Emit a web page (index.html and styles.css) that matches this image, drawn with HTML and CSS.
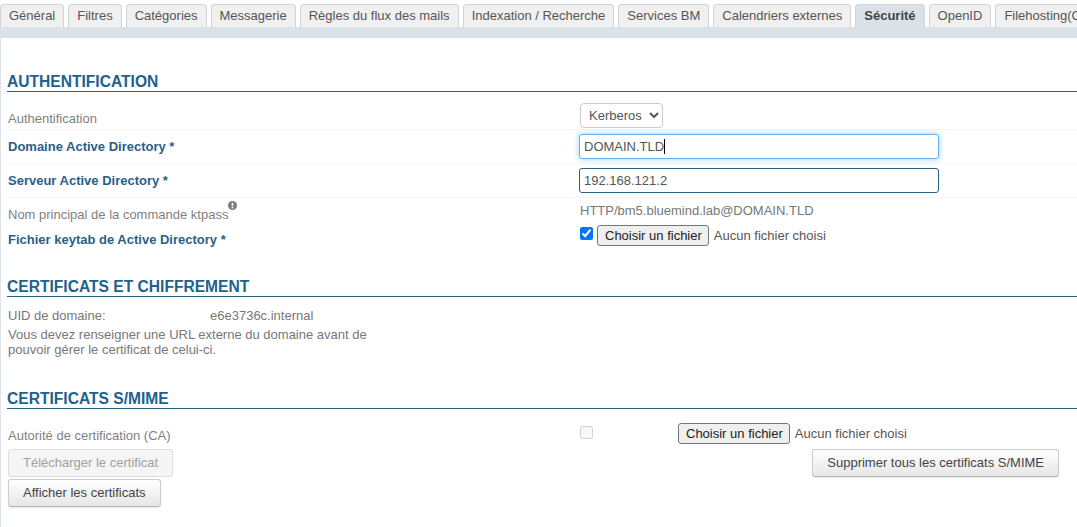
FILE: index.html
```html
<!DOCTYPE html>
<html lang="fr">
<head>
<meta charset="utf-8">
<title>Sécurité</title>
<link rel="stylesheet" href="styles.css">
</head>
<body>
<nav class="tabs">
  <a class="tab">Général</a>
  <a class="tab">Filtres</a>
  <a class="tab">Catégories</a>
  <a class="tab">Messagerie</a>
  <a class="tab">Règles du flux des mails</a>
  <a class="tab">Indexation / Recherche</a>
  <a class="tab">Services BM</a>
  <a class="tab">Calendriers externes</a>
  <a class="tab active">Sécurité</a>
  <a class="tab">OpenID</a>
  <a class="tab">Filehosting(Cloud)</a>
</nav>
<div class="band"></div>
<main class="content">
  <section class="auth">
    <h2>AUTHENTIFICATION</h2>
    <div class="row row-select">
      <label class="lbl">Authentification</label>
      <div><select class="select"><option>Kerberos</option></select></div>
    </div>
    <div class="row row-input">
      <label class="lbl req">Domaine Active Directory *</label>
      <div class="field-wrap"><input class="field focus" type="text" value="DOMAIN.TLD"><span class="caret"></span></div>
    </div>
    <div class="row row-input">
      <label class="lbl req">Serveur Active Directory *</label>
      <div class="field-wrap"><input class="field dark" type="text" value="192.168.121.2"></div>
    </div>
    <div class="row row-plain noline">
      <label class="lbl">Nom principal de la commande ktpass<svg class="info" viewBox="0 0 10 10" width="9" height="9"><circle cx="5" cy="5" r="5" fill="#7b7b7b"/><rect x="4.1" y="2" width="1.8" height="3.8" fill="#fff"/><rect x="4.1" y="6.6" width="1.8" height="1.5" fill="#fff"/></svg></label>
      <div class="value">HTTP/bm5.bluemind.lab@DOMAIN.TLD</div>
    </div>
    <div class="row row-file noline">
      <label class="lbl req">Fichier keytab de Active Directory *</label>
      <div class="file"><input class="check" type="checkbox" checked><button class="choose" type="button">Choisir un fichier</button><span class="none">Aucun fichier choisi</span></div>
    </div>
  </section>
  <section class="certs">
    <h2>CERTIFICATS ET CHIFFREMENT</h2>
    <div class="uid"><span class="uid-k">UID de domaine:</span><span class="uid-v">e6e3736c.internal</span></div>
    <p class="note">Vous devez renseigner une URL externe du domaine avant de pouvoir gérer le certificat de celui-ci.</p>
  </section>
  <section class="smime">
    <h2>CERTIFICATS S/MIME</h2>
    <div class="row row-ca noline">
      <label class="lbl">Autorité de certification (CA)</label>
      <div class="file"><input class="check" type="checkbox" disabled><button class="choose far" type="button">Choisir un fichier</button><span class="none">Aucun fichier choisi</span></div>
    </div>
    <div class="actions">
      <div class="stack">
        <button class="btn" type="button" disabled>Télécharger le certificat</button>
        <button class="btn" type="button">Afficher les certificats</button>
      </div>
      <button class="btn del" type="button">Supprimer tous les certificats S/MIME</button>
    </div>
  </section>
</main>
</body>
</html>
```
FILE: styles.css
```css
* { box-sizing: border-box; }
html, body { margin: 0; height: 100%; overflow: hidden; background: #fff; }
body { font: 13px/18px "Liberation Sans", Arial, sans-serif; color: #555; width: 1077px; height: 527px; }

.tabs { display: flex; gap: 4px; height: 27px; padding-top: 4px; white-space: nowrap; background: #fff; }
.tab { flex: none; height: 23px; padding: 2px 8px 0; background: #f0f0f0; color: #555; border: 1px solid #d3d3d3; border-bottom: 0; border-radius: 4px 4px 0 0; }
.tab.active { background: #dae2e8; font-weight: bold; color: #444; }
.band { height: 11px; background: #dae2e8; }

.content { height: 489px; border-left: 1px solid #dce4ea; padding-left: 6px; }
h2 { margin: 0; font-size: 15.6px; line-height: 20px; font-weight: bold; color: #22618f; border-bottom: 1px solid #2b5f7f; height: 20px; }
.auth { padding-top: 34px; }
.certs { padding-top: 19px; }
.smime { padding-top: 32px; }

.row { display: grid; grid-template-columns: 572px 1fr; padding-left: 1px; border-bottom: 1px solid #f5f5f5; }
.row.noline { border-bottom: 0; }
.lbl { color: #7f7f7f; }
.req { color: #2a5f88; font-weight: bold; }
.row-select { height: 38px; padding-top: 11px; }
.row-select .lbl { padding-top: 7px; }
.row-input { height: 34px; padding-top: 4px; }
.row-input .lbl { padding-top: 4px; }
.row-plain { height: 27px; padding-top: 4px; }
.row-plain .lbl { padding-top: 4px; }
.value { color: #777; }
.row-file { height: 33px; }
.row-file .lbl { padding-top: 6px; }
.row-file .check { margin-bottom: 4px; }

.select { display: block; width: 83px; height: 25px; padding: 0 0 0 4px; font: 13px "Liberation Sans", Arial, sans-serif; color: #555; background: #fff; border: 1px solid #ccc; border-radius: 4px; }
.field-wrap { position: relative; margin-left: -1px; }
.field { display: block; width: 360px; height: 25px; padding: 0 4px; font: 13px "Liberation Sans", Arial, sans-serif; color: #555; background: #fff; border: 1px solid #ccc; border-radius: 3px; outline: 0; }
.field.focus { border-color: #66afe9; box-shadow: 0 0 6px rgba(102,175,233,.6); }
.field.dark { border-color: #2b5f7f; }
.caret { position: absolute; left: 85px; top: 5px; width: 1px; height: 15px; background: #000; }
.info { vertical-align: top; margin: -5px 0 0 0; }

.file { display: flex; align-items: center; height: 21px; }
.check { margin: 0 4px 2px 0; width: 13px; height: 13px; flex: none; }
.choose { flex: none; height: 21px; padding: 0 6px 0 7px; margin: 0 5px 0 0; font: 13px "Liberation Sans", Arial, sans-serif; color: #222; background: #efefef; border: 1px solid #767676; border-radius: 3px; }
.choose.far { margin-left: 81px; }
.none { color: #555; }

.uid { display: flex; padding: 10px 0 0 1px; height: 28px; color: #777; }
.uid-k { flex: none; width: 202px; }
.uid-v { flex: none; }
.note { margin: 2px 0 0 1px; width: 372px; line-height: 15px; color: #777; }

.row-ca { padding-top: 14px; height: 40px; }
.row-ca .lbl { padding-top: 4px; }
.actions { display: flex; align-items: flex-start; padding: 0 0 0 1px; width: 1052px; justify-content: space-between; }
.stack { display: flex; flex-direction: column; align-items: flex-start; gap: 2px; }
.btn { height: 28px; padding: 0 14px 2px; font: 13px "Liberation Sans", Arial, sans-serif; color: #444; background: linear-gradient(#fff, #e6e6e6); border: 1px solid #ccc; border-bottom-color: #b3b3b3; border-radius: 3px; box-shadow: 0 1px 2px rgba(0,0,0,.08); }
.btn:disabled { background: #f5f5f5; color: #a0a0a0; border-color: #ddd; box-shadow: none; }
```
